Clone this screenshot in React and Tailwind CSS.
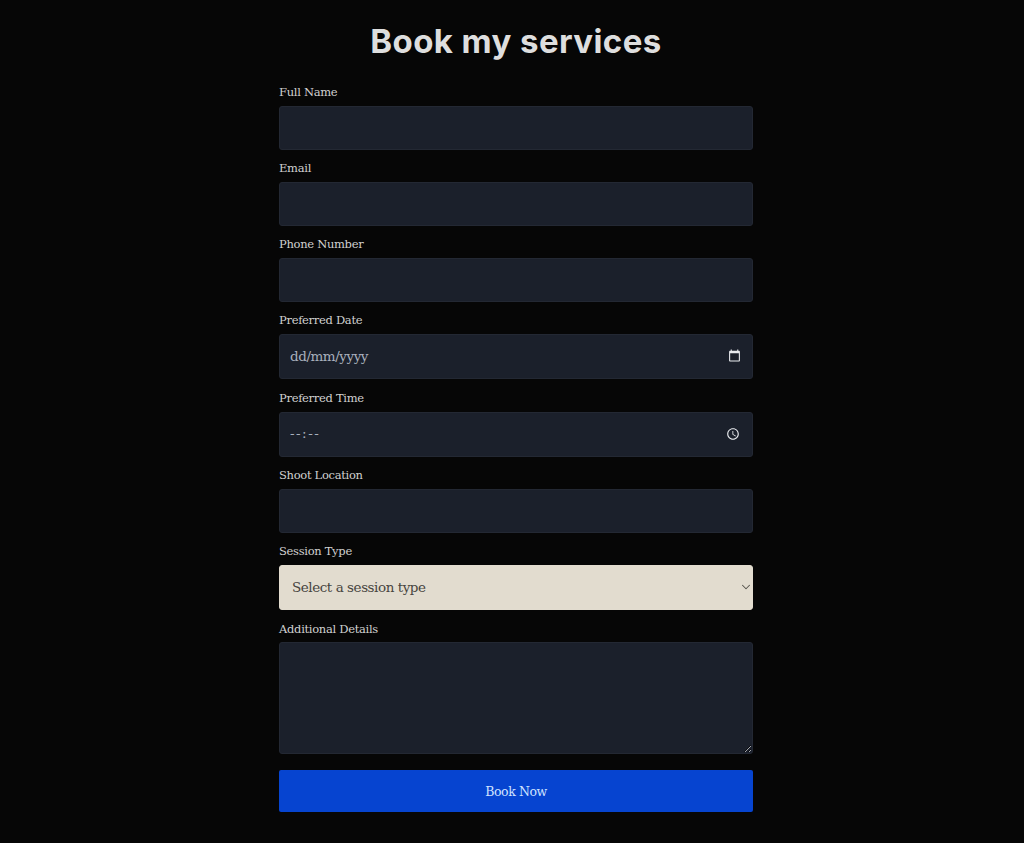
import { ChevronDown } from "lucide-react";

const slab = "font-['DejaVu_Serif','Liberation_Serif',serif]";
const labelCls = `block h-[24px] text-[11.5px] leading-[20px] tracking-[-0.3px] text-[#d1d1d1] ${slab}`;
const inputCls = `block w-full rounded-[3px] border border-[#232833] bg-[#1b202b] pl-[10px] pr-[9px] text-[13.5px] tracking-[-0.45px] text-[#a9b0bd] placeholder:text-[#a9b0bd] outline-none [color-scheme:dark] ${slab}`;

function Field({ label, children, className = "", labelClass = "" }) {
  return (
    <div className={`flex flex-col ${className}`}>
      <label className={`${labelCls} ${labelClass}`}>{label}</label>
      {children}
    </div>
  );
}

function CalendarIcon() {
  return (
    <svg viewBox="0 0 24 24" width="13" height="13" fill="#e8eaee" className="pointer-events-none absolute top-[15px] right-[12px]">
      <path d="M20 3h-1V1h-2v2H7V1H5v2H4c-1.1 0-2 .9-2 2v16c0 1.1.9 2 2 2h16c1.1 0 2-.9 2-2V5c0-1.1-.9-2-2-2zm0 18H4V8h16v13z" />
    </svg>
  );
}

function ClockIcon() {
  return (
    <svg viewBox="0 0 24 24" width="14" height="14" fill="#e8eaee" className="pointer-events-none absolute top-[15px] right-[13px]">
      <path d="M11.99 2C6.47 2 2 6.48 2 12s4.47 10 9.99 10C17.52 22 22 17.52 22 12S17.52 2 11.99 2zM12 20c-4.42 0-8-3.58-8-8s3.58-8 8-8 8 3.58 8 8-3.58 8-8 8zM12.5 7H11v6l5.25 3.15.75-1.23-4.5-2.67z" />
    </svg>
  );
}

export default function App() {
  return (
    <div className="min-h-[843px] bg-[#060606]">
      <div className="mx-auto flex w-[474px] translate-x-[4px] flex-col pt-[20px]">
        <h1 className="mb-[20px] h-[42px] text-center font-['Inter','Noto_Sans',sans-serif] text-[33px] leading-[42px] font-bold tracking-[0.4px] text-[#dedede]">
          Book my services
        </h1>
        <form className="flex flex-col gap-[8px]">
          <Field label="Full Name"><input type="text" className={`${inputCls} h-[44px]`} /></Field>
          <Field label="Email"><input type="email" className={`${inputCls} h-[44px]`} /></Field>
          <Field label="Phone Number"><input type="tel" className={`${inputCls} h-[44px]`} /></Field>
          <Field label="Preferred Date" className="mb-[1px]">
            <div className="relative">
              <input type="text" placeholder="dd/mm/yyyy" className={`${inputCls} h-[45px] pb-[2px]`} />
              <CalendarIcon />
            </div>
          </Field>
          <Field label="Preferred Time">
            <div className="relative">
              <input type="text" placeholder="--:--" className={`${inputCls} h-[45px] pb-[3px] tracking-[1.5px]`} />
              <ClockIcon />
            </div>
          </Field>
          <Field label="Shoot Location"><input type="text" className={`${inputCls} h-[44px]`} /></Field>
          <Field label="Session Type">
            <div className="relative">
              <select className={`block h-[45px] w-full appearance-none rounded-[3px] border border-[#e2dccf] bg-[#e2dccf] px-[12px] text-[13.5px] tracking-[-0.45px] text-[#47453f] outline-none ${slab}`}>
                <option>Select a session type</option>
              </select>
              <ChevronDown size={14} strokeWidth={1.8} className="pointer-events-none absolute top-[15px] right-0 text-[#55534c]" />
            </div>
          </Field>
          <Field label="Additional Details" labelClass="pt-[1px]"><textarea className={`${inputCls} h-[112px] resize-y`} /></Field>
          <button type="button" className={`mt-[8px] h-[42px] w-full rounded-[2px] bg-[#0644d0] pt-[2px] text-[12.5px] tracking-[-0.4px] text-[#cfe2ff] ${slab}`}>
            Book Now
          </button>
        </form>
      </div>
    </div>
  );
}
